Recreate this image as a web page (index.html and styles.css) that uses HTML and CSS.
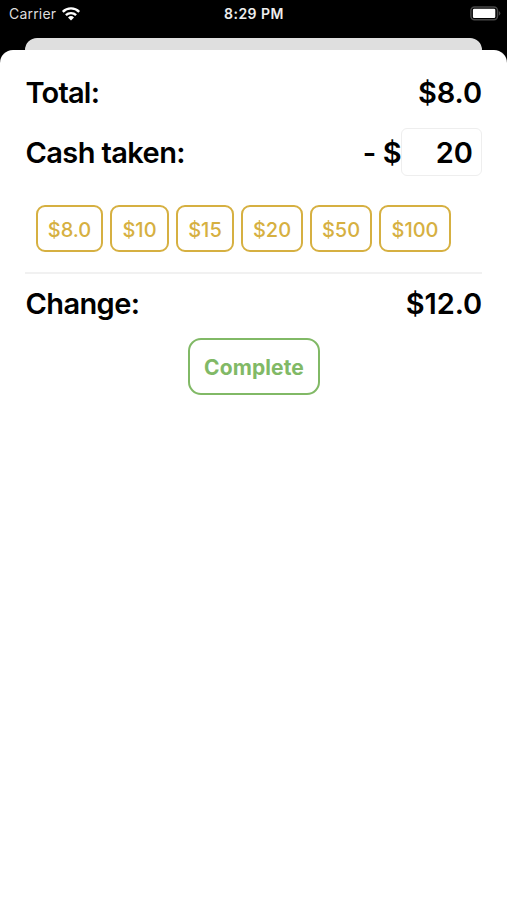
FILE: index.html
```html
<!DOCTYPE html>
<html lang="en">
<head>
  <meta charset="UTF-8">
  <meta name="viewport" content="width=device-width, initial-scale=1" />
  <title>Cash Payment</title>
  <link rel="stylesheet" href="styles.css">
</head>
<body>
  <div class="screen">
    <header class="status-bar">
      <div class="carrier">
        <span>Carrier</span>
        <svg class="wifi" viewBox="0 0 20 14" width="20" height="14">
          <path d="M1.8 4.8a11.6 11.6 0 0 1 16.4 0M4.9 8.2a7.2 7.2 0 0 1 10.2 0" fill="none" stroke="#fff" stroke-width="2.4" />
          <path d="M10 13.6L7 10.5a4.3 4.3 0 0 1 6 0z" fill="#fff" />
        </svg>
      </div>
      <span class="time">8:29 PM</span>
      <svg class="battery" viewBox="0 0 31 15" width="31" height="15">
        <rect x="0.9" y="0.9" width="26.6" height="12.8" rx="3.6" fill="none" stroke="#484848" stroke-width="1.5" />
        <rect x="2.9" y="2.7" width="22.4" height="9.4" rx="1.3" fill="#fff" />
        <path d="M28.8 4.9q1.5.7 1.5 2.4t-1.5 2.4z" fill="#484848" />
      </svg>
    </header>

    <div class="sheet-behind"></div>

    <main class="sheet">
      <div class="line total">
        <span class="label total-label">Total:</span>
        <span class="total-value">$8.0</span>
      </div>
      <div class="line cash">
        <label class="label" for="cash">Cash taken:</label>
        <div class="cash-entry">
          <span class="cash-sign">- $</span>
          <input id="cash" type="text" value="20" />
        </div>
      </div>
      <div class="presets">
        <button class="preset w-67">$8.0</button>
        <button class="preset w-59">$10</button>
        <button class="preset w-58">$15</button>
        <button class="preset w-62">$20</button>
        <button class="preset w-62">$50</button>
        <button class="preset w-72">$100</button>
      </div>
      <div class="line change">
        <span class="label">Change:</span>
        <span class="change-value">$12.0</span>
      </div>
      <button class="complete">Complete</button>
    </main>
  </div>
</body>
</html>
```
FILE: styles.css
```css
* {
  box-sizing: border-box;
}

body {
  margin: 0;
  background-color: #000;
  color: #000;
  font-family: Inter, "Liberation Sans", sans-serif;
}

.screen {
  display: flex;
  flex-direction: column;
  height: 900px;
  overflow: hidden;
}

.status-bar {
  display: grid;
  grid-template-columns: 1fr auto 1fr;
  align-items: center;
  height: 27px;
  padding: 0 6px 0 9px;
  color: #fff;
  font-size: 14px;
}

.carrier {
  display: flex;
  align-items: center;
  gap: 5px;
  color: #ddd;
  letter-spacing: 0.2px;
}

.time {
  margin-right: 2px;
  color: #eee;
  font-weight: 600;
  letter-spacing: 0.5px;
}

.battery {
  justify-self: end;
}

/* edge of the card under the sheet */
.sheet-behind {
  flex: none;
  height: 12px;
  margin: 11px 25px 0;
  background-color: #dfdfdf;
  border-radius: 12px 12px 0 0;
}

.sheet {
  display: flex;
  flex: 1;
  flex-direction: column;
  padding: 18px 25px 0;
  background-color: #fff;
  border-radius: 13px 13px 0 0;
}

.line {
  display: flex;
  align-items: center;
  justify-content: space-between;
  height: 48px;
  font-size: 29px;
  font-weight: 640;
  letter-spacing: -0.1px;
  white-space: nowrap;
}

.label {
  padding-left: 0.5px;
  letter-spacing: -0.6px;
}

.total-label {
  letter-spacing: -0.8px;
}

.cash {
  margin-top: 12px;
}

.cash-entry {
  display: flex;
  align-items: center;
}

.cash-sign {
  letter-spacing: -0.5px;
}

.cash input {
  width: 81px;
  height: 48px;
  padding: 0 8px;
  border: 1px solid #eee;
  border-radius: 6px;
  background-color: #fff;
  color: #000;
  font: inherit;
  text-align: right;
}

.presets {
  display: flex;
  gap: 7px;
  height: 98px;
  padding: 29px 11px 20px;
  border-bottom: 2px solid #f1f1f1;
}

.preset {
  height: 47px;
  padding: 2px 0 0;
  border: 2px solid #d6b041;
  border-radius: 9px;
  background: none;
  color: #d6b041;
  font: 540 20px Inter, "Liberation Sans", sans-serif;
}

.w-58 {
  width: 58px;
}

.w-59 {
  width: 59px;
}

.w-62 {
  width: 62px;
}

.w-67 {
  width: 67px;
}

.w-72 {
  width: 72px;
}

.change {
  height: 46px;
  margin-top: 6px;
}

.complete {
  align-self: center;
  width: 132px;
  height: 57px;
  margin-top: 12px;
  padding: 1px 0 0 1px;
  border: 2px solid #81b966;
  border-radius: 13px;
  background: none;
  color: #81b966;
  font: 700 21px Inter, "Liberation Sans", sans-serif;
  letter-spacing: 0.1px;
}
```
